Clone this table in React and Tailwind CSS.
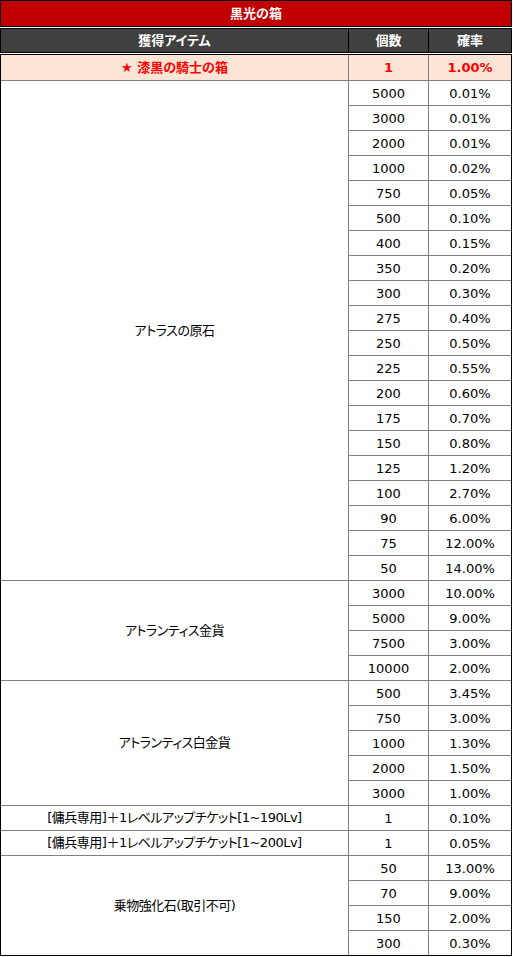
const groups = [
  {
    name: 'アトラスの原石',
    rows: [
      ['5000', '0.01%'], ['3000', '0.01%'], ['2000', '0.01%'], ['1000', '0.02%'],
      ['750', '0.05%'], ['500', '0.10%'], ['400', '0.15%'], ['350', '0.20%'],
      ['300', '0.30%'], ['275', '0.40%'], ['250', '0.50%'], ['225', '0.55%'],
      ['200', '0.60%'], ['175', '0.70%'], ['150', '0.80%'], ['125', '1.20%'],
      ['100', '2.70%'], ['90', '6.00%'], ['75', '12.00%'], ['50', '14.00%'],
    ],
  },
  {
    name: 'アトランティス金貨',
    rows: [['3000', '10.00%'], ['5000', '9.00%'], ['7500', '3.00%'], ['10000', '2.00%']],
  },
  {
    name: 'アトランティス白金貨',
    rows: [['500', '3.45%'], ['750', '3.00%'], ['1000', '1.30%'], ['2000', '1.50%'], ['3000', '1.00%']],
  },
  { name: '[傭兵専用]＋1レベルアップチケット[1~190Lv]', rows: [['1', '0.10%']] },
  { name: '[傭兵専用]＋1レベルアップチケット[1~200Lv]', rows: [['1', '0.05%']] },
  {
    name: '乗物強化石(取引不可)',
    rows: [['50', '13.00%'], ['70', '9.00%'], ['150', '2.00%'], ['300', '0.30%']],
  },
];

export default function App() {
  return (
    <div className="w-[513px] min-h-[957px] bg-white font-['DejaVu_Sans','Noto_Sans_CJK_JP',sans-serif] text-[13px] [font-feature-settings:'palt'] text-black">
      <div className="w-[512px]">
        {/* タイトル */}
        <div className="h-[27px] border border-black bg-[#c00000] flex items-center justify-center text-white font-bold">
          黒光の箱
        </div>

        {/* ヘッダー */}
        <div className="mt-px h-[25px] border border-black bg-[#404040] flex text-white font-bold">
          <div className="w-[348px] border-r border-black flex items-center justify-center">獲得アイテム</div>
          <div className="w-[80px] border-r border-black flex items-center justify-center">個数</div>
          <div className="flex-1 flex items-center justify-center">確率</div>
        </div>

        {/* 本体 */}
        <div className="mt-px border border-black">
          <div className="h-[26px] border-b border-[#808080] bg-[#fce4d6] flex text-[#ff0000] font-bold">
            <div className="w-[348px] border-r border-[#808080] flex items-center justify-center">★ 漆黒の騎士の箱</div>
            <div className="w-[80px] border-r border-[#808080] flex items-center justify-center">1</div>
            <div className="flex-1 flex items-center justify-center">1.00%</div>
          </div>

          {groups.map((g, gi) => {
            const lastGroup = gi === groups.length - 1;
            return (
              <div key={gi} className={lastGroup ? 'flex' : 'flex border-b border-[#808080]'}>
                <div className="w-[348px] border-r border-[#808080] flex items-center justify-center tracking-[-0.5px]">
                  {g.name}
                </div>
                <div className="flex-1 flex flex-col">
                  {g.rows.map((r, ri) => {
                    const last = ri === g.rows.length - 1;
                    return (
                      <div
                        key={ri}
                        className={last ? 'h-[24px] flex' : 'h-[25px] flex border-b border-[#808080]'}
                      >
                        <div className="w-[80px] border-r border-[#808080] flex items-center justify-center pt-px">{r[0]}</div>
                        <div className="flex-1 flex items-center justify-center pt-px">{r[1]}</div>
                      </div>
                    );
                  })}
                </div>
              </div>
            );
          })}
        </div>
      </div>
    </div>
  );
}
